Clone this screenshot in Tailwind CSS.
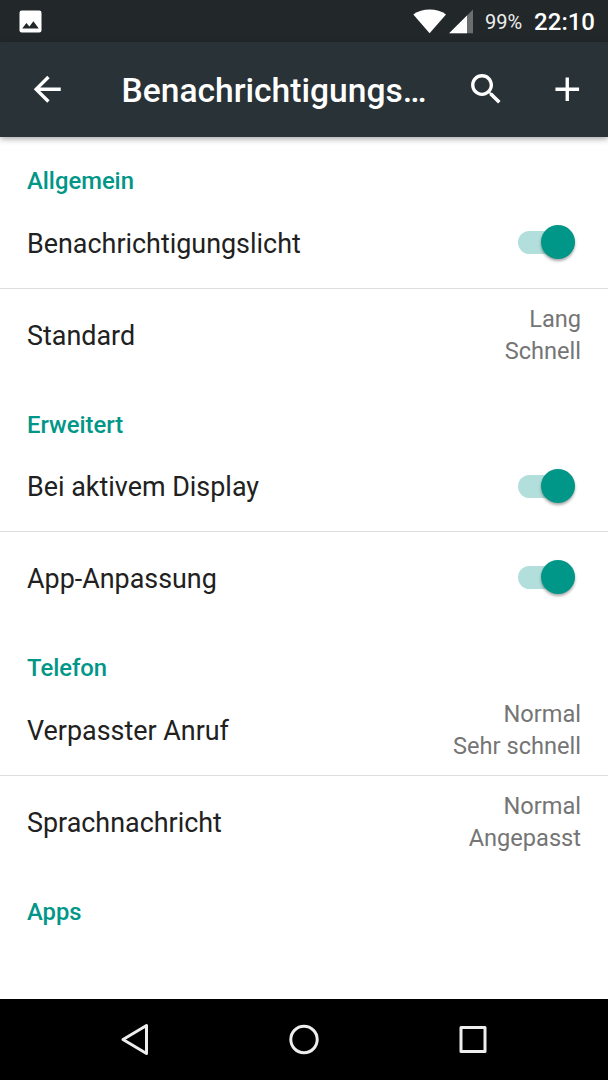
<!DOCTYPE html>
<html lang="de">
<head>
    <meta charset="UTF-8">
    <meta name="viewport" content="width=device-width, initial-scale=1.0">
    <title>Benachrichtigungslicht</title>
    <script src="https://cdn.jsdelivr.net/npm/@tailwindcss/browser@4"></script>
</head>
<body class="w-[608px] h-[1080px] overflow-hidden bg-white font-[Roboto,sans-serif] flex flex-col text-[#212121]">
    <!-- Status bar -->
    <div class="h-[42px] shrink-0 bg-[#22272a] flex items-center pl-[19px] pr-[13px] text-white">
        <svg class="size-[23px]" viewBox="0 0 23 23">
            <rect x="0.5" y="0.5" width="22" height="22" rx="2.2" fill="#fff"/>
            <path d="M3.2 18.5 7.4 13l3 3.5 4-5.2 5.4 7.2z" fill="#22272a"/>
        </svg>
        <svg class="ml-auto w-[60px] h-[26px]" viewBox="0 0 60 26">
            <path d="M0.3 6.5C9-.3 24.5-.3 33 6.5L16.6 25.2z" fill="#fff"/>
            <path d="M60 1.5v23.7H36.2z" fill="#6b6e70"/>
            <path d="M54 7.5v17.7H36.2z" fill="#fff"/>
        </svg>
        <span class="ml-[12px] text-[20px] leading-none text-[#eeeeee] pt-[2px]">99%</span>
        <span class="ml-[12px] text-[24px] leading-none font-medium pt-[2px]">22:10</span>
    </div>

    <!-- Toolbar -->
    <header class="relative h-[94.5px] shrink-0 bg-[#283237] flex items-center text-white shadow-[0_2px_6px_rgba(0,0,0,0.35)]">
        <svg class="ml-[27px] size-[40.5px] shrink-0" viewBox="0 0 24 24" fill="currentColor">
            <path d="M20 11H7.83l5.59-5.59L12 4l-8 8 8 8 1.41-1.41L7.83 13H20v-2z"/>
        </svg>
        <h1 class="ml-[54px] w-[320px] text-[33.6px] leading-none font-medium whitespace-nowrap pt-[4px]">Benachrichtigungs…</h1>
        <svg class="ml-auto size-[40.5px] shrink-0" viewBox="0 0 24 24" fill="currentColor">
            <path d="M15.5 14h-.79l-.28-.27C15.41 12.59 16 11.11 16 9.5 16 5.91 13.09 3 9.5 3S3 5.91 3 9.5 5.91 16 9.5 16c1.61 0 3.09-.59 4.23-1.57l.27.28v.79l5 4.99L20.49 19l-4.99-5zm-6 0C7.01 14 5 11.99 5 9.5S7.01 5 9.5 5 14 7.01 14 9.5 11.99 14 9.5 14z"/>
        </svg>
        <svg class="ml-[40.5px] mr-[20.5px] size-[40.5px] shrink-0" viewBox="0 0 24 24" fill="currentColor">
            <path d="M19 13h-6v6h-2v-6H5v-2h6V5h2v6h6v2z"/>
        </svg>
    </header>

    <!-- Settings list -->
    <main class="flex-1 min-h-0 overflow-hidden text-[26.9px]">
        <section class="h-[243.7px]">
            <h2 class="h-[60.7px] pt-[28.2px] pl-[27px] text-[23.8px] leading-[32px] font-medium text-[#009688]">Allgemein</h2>
            <div class="h-[91.5px] flex items-center justify-between pl-[27px] pr-[33px] border-b border-[#dedede]">
                <span class="pt-[3px]">Benachrichtigungslicht</span>
                <span class="w-[57px] h-[23px] rounded-full bg-[#b2dfdb] flex items-center justify-end"><i class="size-[34px] rounded-full bg-[#009688] shadow-[0_2px_3px_rgba(0,0,0,0.35)]"></i></span>
            </div>
            <div class="h-[91.5px] flex items-center justify-between pl-[27px] pr-[27px]">
                <span class="pt-[3px]">Standard</span>
                <span class="pt-px text-right text-[23.6px] leading-[32px] text-[#757575]">Lang<br>Schnell</span>
            </div>
        </section>
        <section class="h-[243.7px]">
            <h2 class="h-[60.7px] pt-[28.6px] pl-[27px] text-[23.8px] leading-[32px] font-medium text-[#009688]">Erweitert</h2>
            <div class="h-[91.5px] flex items-center justify-between pl-[27px] pr-[33px] border-b border-[#dedede]">
                <span class="pt-[3px]">Bei aktivem Display</span>
                <span class="w-[57px] h-[23px] rounded-full bg-[#b2dfdb] flex items-center justify-end"><i class="size-[34px] rounded-full bg-[#009688] shadow-[0_2px_3px_rgba(0,0,0,0.35)]"></i></span>
            </div>
            <div class="h-[91.5px] flex items-center justify-between pl-[27px] pr-[33px]">
                <span class="pt-[3px]">App-Anpassung</span>
                <span class="mb-[1.5px] w-[57px] h-[23px] rounded-full bg-[#b2dfdb] flex items-center justify-end"><i class="size-[34px] rounded-full bg-[#009688] shadow-[0_2px_3px_rgba(0,0,0,0.35)]"></i></span>
            </div>
        </section>
        <section class="h-[243.7px]">
            <h2 class="h-[60.7px] pt-[28px] pl-[27px] text-[23.8px] leading-[32px] font-medium text-[#009688]">Telefon</h2>
            <div class="h-[91.5px] flex items-center justify-between pl-[27px] pr-[27px] border-b border-[#dedede]">
                <span class="pt-[3px]">Verpasster Anruf</span>
                <span class="text-right text-[23.6px] leading-[32px] text-[#757575]">Normal<br>Sehr schnell</span>
            </div>
            <div class="h-[91.5px] flex items-center justify-between pl-[27px] pr-[27px]">
                <span class="pt-[3px]">Sprachnachricht</span>
                <span class="text-right text-[23.6px] leading-[32px] text-[#757575]">Normal<br>Angepasst</span>
            </div>
        </section>
        <section>
            <h2 class="h-[60.7px] pt-[28px] pl-[27px] text-[23.8px] leading-[32px] font-medium text-[#009688]">Apps</h2>
        </section>
    </main>

    <!-- Navigation bar -->
    <nav class="h-[81px] shrink-0 bg-black flex items-center justify-center gap-[128px]">
        <svg class="size-[41px]" viewBox="0 0 41 41" fill="none" stroke="#eeeeee" stroke-width="3" stroke-linejoin="round">
            <path d="M31.5 6.5v28L8 20.5z"/>
        </svg>
        <svg class="size-[41px]" viewBox="0 0 41 41" fill="none" stroke="#eeeeee" stroke-width="3">
            <circle cx="20" cy="20.5" r="13.2"/>
        </svg>
        <svg class="size-[41px]" viewBox="0 0 41 41" fill="none" stroke="#eeeeee" stroke-width="3" stroke-linejoin="round">
            <rect x="8" y="8.5" width="24" height="24"/>
        </svg>
    </nav>
</body>
</html>
